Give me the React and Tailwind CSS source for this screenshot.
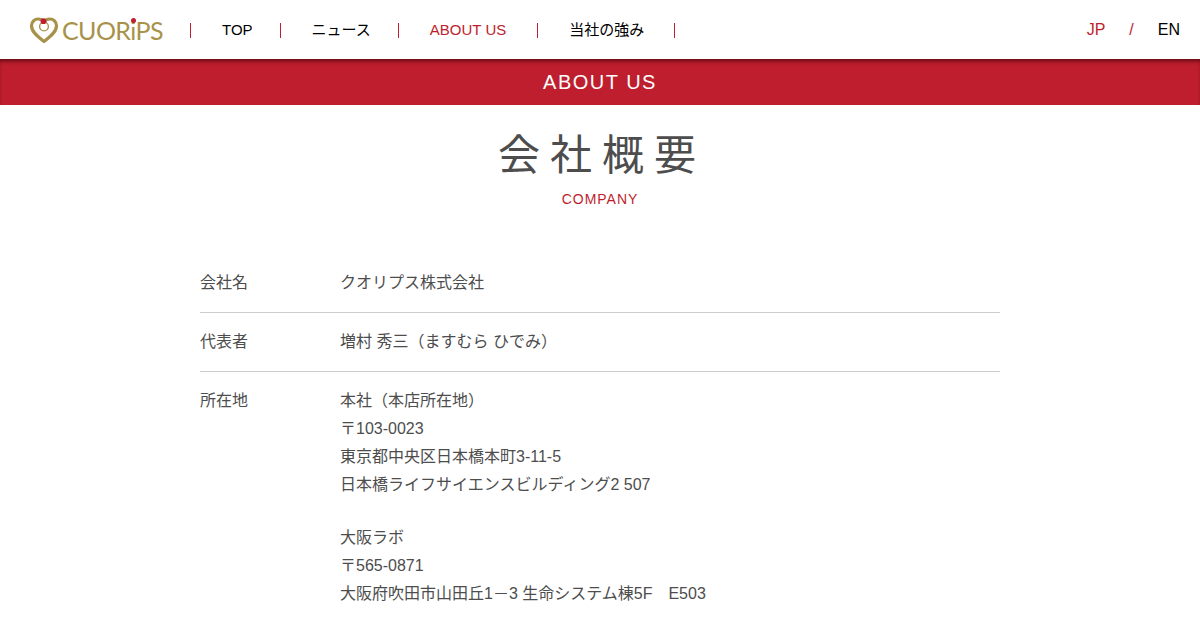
const font = "font-['Liberation_Sans','Noto_Sans_CJK_JP',sans-serif]";

function Logo() {
  return (
    <div className="flex items-center ml-[29px] w-[135px]">
      <svg width="30" height="27" viewBox="0 0 30 27" className="shrink-0">
        <path
          d="M15 24.5C9 20 2.5 15 2.5 8.8C2.5 4.8 5.6 2 9.2 2C11.6 2 13.6 3 15 4.8C16.4 3 18.4 2 20.8 2C24.4 2 27.5 4.8 27.5 8.8C27.5 15 21 20 15 24.5Z"
          fill="none"
          stroke="#a8924a"
          strokeWidth="3.2"
          strokeLinejoin="round"
        />
        <circle cx="15" cy="9.5" r="4.4" fill="none" stroke="#a8924a" strokeWidth="1.4" />
        <circle cx="14.5" cy="4.2" r="2.9" fill="#be1e2d" />
      </svg>
      <span className="relative ml-[3px] text-[25px] leading-none tracking-[-0.6px] text-[#a8924a] font-['Lato',sans-serif]">
        CUOR
        <span className="relative">
          i
          <span className="absolute left-[1px] top-[3px] w-[5px] h-[5px] rounded-full bg-[#be1e2d]" />
        </span>
        PS
      </span>
    </div>
  );
}

function Sep() {
  return <span className="w-px h-[15px] bg-[#be1e2d] shrink-0" />;
}

function Row({ label, children, border }) {
  return (
    <div className={`flex pt-[15px] pb-[15px] ${border ? "border-b border-[#ccc]" : ""}`}>
      <div className="w-[140px] shrink-0">{label}</div>
      <div>{children}</div>
    </div>
  );
}

export default function App() {
  return (
    <div className={`${font} w-[1200px] h-[630px] overflow-hidden bg-white`}>
      <header className="flex items-center h-[59px] pr-5 pt-[1px]">
        <Logo />
        <nav className="flex items-center text-[15px] ml-[26px] text-black">
          <Sep />
          <a className="pl-[31px] pr-[27px]">TOP</a>
          <Sep />
          <a className="pl-[31px] pr-[27px]">ニュース</a>
          <Sep />
          <a className="pl-[31px] pr-[31px] text-[#be1e2d]">ABOUT US</a>
          <Sep />
          <a className="pl-[31px] pr-[30px]">当社の強み</a>
          <Sep />
        </nav>
        <div className="ml-auto flex items-center gap-[24px] text-base">
          <span className="text-[#be1e2d]">JP</span>
          <span className="text-[#be1e2d]">/</span>
          <span className="text-black">EN</span>
        </div>
      </header>
      <div className="h-[46px] flex items-center justify-center bg-[#be1e2d] text-white text-xl tracking-[1.5px] shadow-[inset_0_4px_4px_-2px_rgba(60,0,5,0.75)]">
        ABOUT US
      </div>
      <div className="text-center pt-[24px]">
        <h1 className="text-[42px] leading-[54px] font-normal tracking-[10px] text-[#4d4d4d] pl-[4px]">
          会社概要
        </h1>
        <p className="mt-[6px] text-sm leading-[20px] tracking-[1px] text-[#be1e2d]">COMPANY</p>
      </div>
      <div className="w-[800px] mx-auto mt-[45px] text-base leading-[28px] text-[#4d4d4d]">
        <Row label="会社名" border>クオリプス株式会社</Row>
        <Row label="代表者" border>増村 秀三（ますむら ひでみ）</Row>
        <Row label="所在地">
          <p>本社（本店所在地）</p>
          <p>〒103-0023</p>
          <p>東京都中央区日本橋本町3-11-5</p>
          <p>日本橋ライフサイエンスビルディング2 507</p>
          <p className="mt-[25px]">大阪ラボ</p>
          <p>〒565-0871</p>
          <p>大阪府吹田市山田丘1－3 生命システム棟5F　E503</p>
        </Row>
      </div>
    </div>
  );
}
